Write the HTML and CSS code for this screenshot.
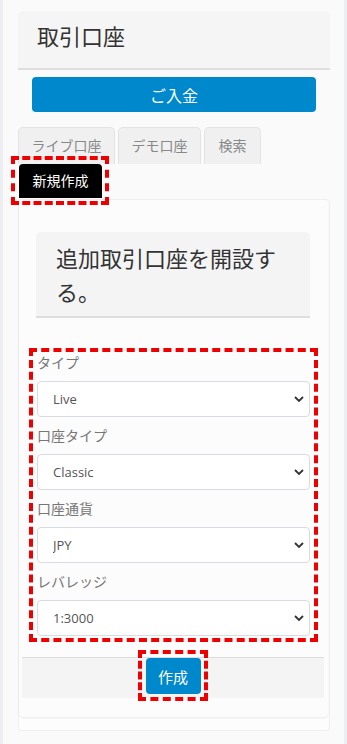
FILE: index.html
```html
<!DOCTYPE html>
<html lang="ja">

<head>
    <meta charset="UTF-8">
    <meta name="viewport" content="width=device-width, initial-scale=1">
    <title>取引口座</title>
    <link rel="stylesheet" href="styles.css">
</head>

<body>
    <div class="page">
        <div class="page-header">
            <h1 class="page-title">取引口座</h1>
        </div>
        <button class="deposit-btn">ご入金</button>

        <div class="tabs">
            <div class="tab tab-live">ライブ口座</div>
            <div class="tab tab-demo">デモ口座</div>
            <div class="tab tab-search">検索</div>
        </div>
        <div class="new-btn marked">新規作成</div>

        <div class="card">
            <div class="panel">
                <div class="panel-heading">
                    <h2>追加取引口座を開設する。</h2>
                </div>

                <div class="form-box">
                    <label class="field-label">タイプ</label>
                    <div class="select-wrap">
                        <select>
                            <option>Live</option>
                        </select>
                        <svg class="chevron" viewBox="0 0 10 6" width="10" height="6">
                            <path d="M1 1 L5 5 L9 1" fill="none" stroke="#333" stroke-width="1.8" />
                        </svg>
                    </div>

                    <label class="field-label">口座タイプ</label>
                    <div class="select-wrap">
                        <select>
                            <option>Classic</option>
                        </select>
                        <svg class="chevron" viewBox="0 0 10 6" width="10" height="6">
                            <path d="M1 1 L5 5 L9 1" fill="none" stroke="#333" stroke-width="1.8" />
                        </svg>
                    </div>

                    <label class="field-label">口座通貨</label>
                    <div class="select-wrap">
                        <select>
                            <option>JPY</option>
                        </select>
                        <svg class="chevron" viewBox="0 0 10 6" width="10" height="6">
                            <path d="M1 1 L5 5 L9 1" fill="none" stroke="#333" stroke-width="1.8" />
                        </svg>
                    </div>

                    <label class="field-label">レバレッジ</label>
                    <div class="select-wrap last">
                        <select>
                            <option>1:3000</option>
                        </select>
                        <svg class="chevron" viewBox="0 0 10 6" width="10" height="6">
                            <path d="M1 1 L5 5 L9 1" fill="none" stroke="#333" stroke-width="1.8" />
                        </svg>
                    </div>
                </div>

                <div class="panel-footer">
                    <button class="create-btn marked">作成</button>
                </div>
            </div>
        </div>
    </div>
</body>

</html>
```

FILE: styles.css
```css
/* ページ全体 */
html,
body {
    margin: 0;
    padding: 0;
}

body {
    background-color: #eceef2;
    font-family: "Open Sans", "Noto Sans CJK JP", sans-serif;
    color: #333;
}

.page {
    margin: 0 3px;
    min-height: 744px;
    box-sizing: border-box;
    background-color: #fafafa;
    padding: 11px 14px 11px 15px;
}

/* ヘッダー */
.page-header {
    background-color: #f5f5f5;
    border-radius: 5px 5px 0 0;
    border-bottom: 2px solid #dedede;
    padding: 10px 19px 17px;
}

.page-title {
    margin: 0;
    font-size: 22px;
    font-weight: 400;
    line-height: 30px;
    color: #333;
}

.deposit-btn {
    display: block;
    width: calc(100% - 28px);
    height: 35px;
    margin: 7px 14px 0;
    border: none;
    border-radius: 4px;
    background-color: #0088cc;
    color: #fff;
    font-family: inherit;
    font-size: 16px;
    padding: 0;
}

/* タブ */
.tabs {
    display: flex;
    gap: 3px;
    margin-top: 15px;
}

.tab {
    height: 37px;
    box-sizing: border-box;
    line-height: 36px;
    text-align: center;
    font-size: 14px;
    color: #888;
    background-color: #f0f0f0;
    border: 1px solid #e3e3e3;
    border-bottom: none;
    border-radius: 5px 5px 0 0;
}

.tab-live {
    width: 97px;
}

.tab-demo {
    width: 83px;
}

.tab-search {
    width: 57px;
}

.new-btn {
    position: relative;
    width: 83px;
    height: 34px;
    margin-left: 1px;
    line-height: 34px;
    text-align: center;
    font-size: 14px;
    color: #fff;
    background-color: #000;
    border-radius: 4px 4px 0 0;
    z-index: 2;
}

/* 赤い点線の枠 */
.marked::after {
    content: "";
    position: absolute;
    top: -8px;
    left: -8px;
    right: -7px;
    bottom: -7px;
    border: 4px dashed #ee0000;
    pointer-events: none;
}

/* カード */
.card {
    margin-top: 1px;
    background-color: #fdfdfd;
    border: 1px solid #efefef;
    border-radius: 4px;
    padding: 0 1px 13px 0;
}

.panel {
    background-color: #fcfcfc;
    border-radius: 4px;
    box-shadow: 0 1px 2px rgba(0, 0, 0, 0.08);
    padding: 32px 0 19px;
}

.panel-heading {
    margin: 0 18px 30px 17px;
    background-color: #f4f4f4;
    border-radius: 5px 5px 0 0;
    border-bottom: 2px solid #dddddd;
    padding: 9px 20px 7px;
}

.panel-heading h2 {
    margin: 0;
    font-size: 22px;
    font-weight: 400;
    line-height: 34px;
    color: #333;
}

/* フォーム */
.form-box {
    margin: 0 10px;
    border: 4px dashed #ee0000;
    padding: 1px 4px 2px;
}

.field-label {
    display: block;
    font-size: 14px;
    line-height: 20px;
    color: #777;
    margin-bottom: 8px;
}

.select-wrap {
    position: relative;
    margin-bottom: 9px;
}

.select-wrap.last {
    margin-bottom: 0;
}

.select-wrap select {
    display: block;
    width: 100%;
    height: 36px;
    box-sizing: border-box;
    appearance: none;
    -webkit-appearance: none;
    border: 1px solid #d8dce0;
    border-radius: 4px;
    background-color: #fff;
    padding: 0 15px;
    font-family: "Open Sans", sans-serif;
    font-size: 13px;
    color: #555;
    outline: none;
}

.chevron {
    position: absolute;
    right: 6px;
    top: 15px;
    pointer-events: none;
}

/* フッター */
.panel-footer {
    margin: 15px 4px 0 3px;
    background-color: #f4f4f4;
    border-top: 1px solid #dddddd;
    padding: 0 0 4px;
    display: flex;
    justify-content: center;
}

.create-btn {
    position: relative;
    width: 55px;
    height: 36px;
    border: none;
    border-radius: 4px;
    background-color: #0088cc;
    color: #fff;
    font-family: inherit;
    font-size: 15px;
    padding: 0;
}
```
